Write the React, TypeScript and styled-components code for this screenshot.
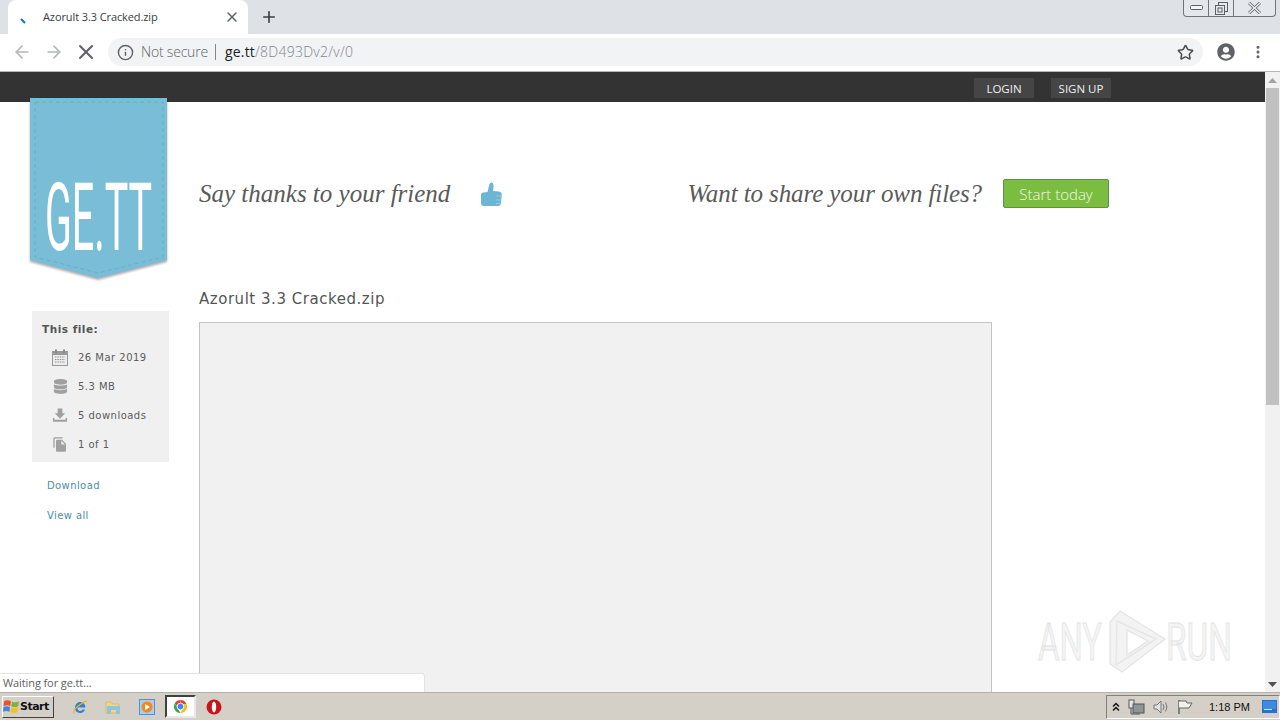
import React from "react";
import styled, { createGlobalStyle } from "styled-components";
import { ArrowLeft, ArrowRight, X, Info, Star, Plus, EllipsisVertical } from "lucide-react";
import { FaDatabase, FaUserCircle } from "react-icons/fa";
import { MdFileCopy } from "react-icons/md";

const Global = createGlobalStyle`
  html, body { margin: 0; padding: 0; width: 1280px; height: 720px; overflow: hidden; background: #fff; }
  * { box-sizing: border-box; }
`;

const Screen = styled.div`
  position: relative;
  width: 1280px;
  height: 720px;
  display: flex;
  flex-direction: column;
  overflow: hidden;
  font-family: "Open Sans", "Liberation Sans", sans-serif;
`;

const TabStrip = styled.div`
  height: 34px;
  background: #dee1e6;
  display: flex;
  align-items: stretch;
  padding-left: 8px;
  position: relative;
  flex: none;
`;

const Tab = styled.div`
  width: 240px;
  background: #fff;
  border-radius: 8px 8px 0 0;
  display: flex;
  align-items: center;
  padding: 0 8px 0 35px;
  font-size: 11px;
  color: #3c4043;
  position: relative;
`;

const TabTitle = styled.span`
  flex: 1;
  letter-spacing: -0.1px;
  padding-bottom: 2px;
`;

const Spinner = styled.svg`
  position: absolute;
  left: 12px;
  top: 17px;
`;

const NewTab = styled.div`
  margin-left: 12px;
  display: flex;
  align-items: center;
  color: #3c4043;
`;

const WindowControls = styled.div`
  position: absolute;
  right: 4px;
  top: 0;
  height: 17px;
  width: 93px;
  display: grid;
  grid-template-columns: 25px 25px 1fr;
  border: 1px solid #70757c;
  border-top: none;
  border-radius: 0 0 4px 4px;
  background: #e4e7ec;
`;

const ControlCell = styled.div<{ $line?: boolean }>`
  display: flex;
  align-items: center;
  justify-content: center;
  border-right: ${(p) => (p.$line ? "1px solid #70757c" : "none")};
`;

const Toolbar = styled.div`
  height: 38px;
  flex: none;
  background: #fff;
  border-bottom: 1px solid #b8b8b8;
  display: flex;
  align-items: center;
  padding: 0 0 1px 6px;
`;

const NavSlot = styled.div<{ $color: string }>`
  width: 32px;
  display: flex;
  align-items: center;
  justify-content: center;
  color: ${(p) => p.$color};
  flex: none;
`;

const Omnibox = styled.div`
  margin-left: 6px;
  width: 1095px;
  height: 28px;
  background: #f1f3f4;
  border-radius: 14px;
  display: flex;
  align-items: center;
  padding: 0 9px 0 9px;
  font-size: 14px;
  color: #5f6368;
  flex: none;
  letter-spacing: -0.2px;
`;

const SecureText = styled.span`
  margin-left: 7px;
  font-weight: 300;
  padding-bottom: 2px;
`;

const Divider = styled.span`
  width: 1px;
  height: 16px;
  background: #80868b;
  margin: 0 9px 0 7px;
`;

const Host = styled.span`
  color: #202124;
  padding-bottom: 2px;
  letter-spacing: 0.2px;
`;

const UrlPath = styled.span`
  color: #80868b;
  font-weight: 300;
  flex: 1;
  padding-bottom: 2px;
  letter-spacing: 0.26px;
`;

const ToolIcons = styled.div`
  display: flex;
  align-items: center;
  color: #5f6368;
  margin-left: 14px;
  gap: 15px;
`;

const PageArea = styled.div`
  flex: 1;
  min-height: 0;
  display: flex;
  position: relative;
`;

const Viewport = styled.div`
  flex: 1;
  min-width: 0;
  background: #fff;
  overflow: hidden;
  display: flex;
  flex-direction: column;
`;

const TopBar = styled.div`
  height: 30px;
  background: #333;
  flex: none;
  display: flex;
  align-items: center;
  justify-content: flex-end;
  gap: 17px;
  padding: 2px 154px 0 0;
`;

const TopButton = styled.div<{ $w: number }>`
  width: ${(p) => p.$w}px;
  height: 20px;
  background: #454545;
  color: #f0f0f0;
  font-size: 11.5px;
  display: flex;
  align-items: flex-end;
  justify-content: center;
  padding: 0 0 2px 0;
  line-height: 15px;
`;

const Logo = styled.svg`
  position: absolute;
  left: 28px;
  top: 24px;
  filter: drop-shadow(0 2px 1px rgba(0, 0, 0, 0.32));
`;

const Columns = styled.div`
  flex: 1;
  min-height: 0;
  display: flex;
`;

const SideColumn = styled.div`
  width: 137px;
  margin-left: 32px;
  padding-top: 209px;
  flex: none;
`;

const FileCard = styled.div`
  height: 151px;
  background: #f0f0f0;
  padding: 10px 0 0 10px;
  font-family: "DejaVu Sans", sans-serif;
  color: #555;
`;

const CardTitle = styled.div`
  font-size: 10.5px;
  font-weight: 700;
  letter-spacing: 0.5px;
  line-height: 16px;
  margin-bottom: 6px;
  color: #555;
`;

const FactRow = styled.div`
  height: 29px;
  display: flex;
  align-items: center;
  font-size: 10px;
  letter-spacing: 0.48px;
  color: #5c5c5c;
`;

const FactIcon = styled.div`
  width: 16px;
  margin: 0 10px 0 10px;
  display: flex;
  justify-content: center;
  color: #a0a0a0;
`;

const SideLink = styled.a`
  display: block;
  margin: 15px 0 0 15px;
  height: 15px;
  line-height: 15px;
  font-family: "DejaVu Sans", sans-serif;
  font-size: 10px;
  letter-spacing: 0.4px;
  color: #4f8ea3;
  position: relative;
  top: 1px;
`;

const MainColumn = styled.div`
  margin-left: 30px;
  width: 910px;
  padding-top: 77px;
  flex: none;
`;

const Promo = styled.div`
  height: 29px;
  display: flex;
  align-items: center;
`;

const Tagline = styled.span<{ $tight?: boolean }>`
  font-family: "Liberation Serif", serif;
  font-style: italic;
  font-size: 25px;
  letter-spacing: ${(p) => (p.$tight ? "-0.1px" : "0")};
  color: #5a5a5a;
  white-space: nowrap;
`;

const ThumbSlot = styled.span`
  margin-left: 31px;
  display: flex;
`;

const ShareSlot = styled.div`
  margin-left: auto;
  display: flex;
  align-items: center;
  gap: 21px;
`;

const StartButton = styled.div`
  width: 106px;
  height: 29px;
  background: #7abd3f;
  border: 1px solid #5f8f52;
  border-radius: 2px;
  color: #f2f8ea;
  font-size: 15px;
  font-weight: 300;
  display: flex;
  align-items: center;
  justify-content: center;
`;

const FileName = styled.h1`
  margin: 80px 0 0;
  font-family: "DejaVu Sans", sans-serif;
  font-weight: 400;
  font-size: 15px;
  line-height: 22px;
  letter-spacing: 0.53px;
  color: #555;
`;

const Preview = styled.div`
  margin-top: 12px;
  width: 793px;
  height: 600px;
  background: #f1f1f1;
  border: 1px solid #c4c4c4;
`;

const Scrollbar = styled.div`
  width: 15px;
  flex: none;
  background: #f1f1f1;
  display: flex;
  flex-direction: column;
  align-items: center;
`;

const ScrollArrow = styled.div`
  height: 16px;
  display: flex;
  align-items: center;
  justify-content: center;
  flex: none;
`;

const ScrollThumb = styled.div`
  width: 13px;
  height: 317px;
  background: #c1c1c1;
  flex: none;
`;

const ScrollSpace = styled.div`
  flex: 1;
`;

const Watermark = styled.svg`
  position: absolute;
  left: 1036px;
  top: 536px;
`;

const StatusBubble = styled.div`
  position: absolute;
  left: 0;
  bottom: 0;
  width: 425px;
  height: 19px;
  background: #fff;
  border: 1px solid #e3e3e3;
  border-left: none;
  border-bottom: none;
  border-radius: 0 3px 0 0;
  font-size: 11px;
  line-height: 18px;
  padding-left: 3px;
  letter-spacing: -0.1px;
  color: #5f5f5f;
`;

const Taskbar = styled.div`
  height: 28px;
  flex: none;
  background: #d4d0c8;
  border-top: 1px solid #b4b1aa;
  display: flex;
  align-items: center;
  padding-left: 2px;
`;

const StartBtn = styled.div`
  width: 52px;
  height: 22px;
  background: #d4d0c8;
  border: 1px solid;
  border-color: #fff #404040 #404040 #fff;
  display: flex;
  align-items: center;
  font-family: "DejaVu Sans", sans-serif;
  font-weight: 700;
  font-size: 11px;
  letter-spacing: -0.5px;
  color: #111;
`;

const QuickIcon = styled.div<{ $ml: number }>`
  margin-left: ${(p) => p.$ml}px;
  width: 16px;
  height: 16px;
  display: flex;
  flex: none;
`;

const ActiveTask = styled.div`
  margin-left: 10px;
  width: 31px;
  height: 23px;
  background: #fff;
  border: 2px solid;
  border-color: #404040 #e8e8e8 #e8e8e8 #404040;
  display: flex;
  align-items: center;
  justify-content: center;
  flex: none;
`;

const Tray = styled.div`
  margin-left: auto;
  width: 174px;
  height: 24px;
  border: 1px solid;
  border-color: #808080 #fff #fff #808080;
  display: flex;
  align-items: center;
  padding-left: 5px;
  font-family: "Liberation Sans", sans-serif;
  font-size: 11px;
  color: #111;
`;

const TrayItem = styled.div<{ $ml: number }>`
  margin-left: ${(p) => p.$ml}px;
  display: flex;
  flex: none;
`;

const Clock = styled.span`
  margin-left: 16px;
  white-space: nowrap;
`;

const CalendarIcon = () => (
  <svg width="16" height="17" viewBox="0 0 16 17">
    <rect x="0.5" y="2.5" width="15" height="14" fill="#ececec" stroke="#9a9a9a" />
    <rect x="1" y="3" width="14" height="3" fill="#9a9a9a" />
    <rect x="3" y="0.5" width="2" height="4" fill="#8a8a8a" />
    <rect x="11" y="0.5" width="2" height="4" fill="#8a8a8a" />
    <path d="M3 8 H13 M3 10.5 H13 M3 13 H13" stroke="#8e8e8e" strokeDasharray="1.4 1" />
  </svg>
);

const DownloadIcon = () => (
  <svg width="17" height="16" viewBox="0 0 17 16">
    <path d="M6 0 H11 V5 H14 L8.5 11 L3 5 H6 Z" fill="#a0a0a0" />
    <path d="M1 10 V14 H16 V10 H14.5 V12 H2.5 V10 Z" fill="#a0a0a0" />
  </svg>
);

const ThumbIcon = () => (
  <svg width="21" height="24" viewBox="0 0 21 24">
    <path
      d="M0 13 Q0 10.5 2.5 10.5 L6.5 10 L8.5 2 Q9.5 0 11 .5 Q13 1.5 12.5 5 L12 9 L18 9.5 Q21 10 20.7 12.5 L20 21.5 Q19.5 24 17 24 L3 24 Q0 24 0 21 Z"
      fill="#6cb6d4"
    />
    <path d="M15 14 H20.5 M15 18 H20 M15 21.5 H19.5" stroke="#9dd0e5" strokeWidth="0.8" />
  </svg>
);

const facts = [
  { icon: <CalendarIcon />, label: "26 Mar 2019" },
  { icon: <FaDatabase size={15} />, label: "5.3 MB" },
  { icon: <DownloadIcon />, label: "5 downloads" },
  { icon: <MdFileCopy size={19} />, label: "1 of 1" },
];

export default function App() {
  return (
    <Screen>
      <Global />
      <TabStrip>
        <Tab>
          <Spinner width="8" height="8" viewBox="0 0 8 8">
            <path d="M1 2 L5 6" stroke="#1a6fb5" strokeWidth="2" fill="none" />
          </Spinner>
          <TabTitle>Azorult 3.3 Cracked.zip</TabTitle>
          <X size={16} strokeWidth={2.2} color="#5f6368" />
        </Tab>
        <NewTab>
          <Plus size={18} strokeWidth={2.2} />
        </NewTab>
        <WindowControls>
          <ControlCell $line>
            <svg width="13" height="6" viewBox="0 0 13 6">
              <rect x="0.5" y="0.5" width="12" height="4" rx="1" fill="#f3f4f6" stroke="#5c6066" />
            </svg>
          </ControlCell>
          <ControlCell $line>
            <svg width="13" height="13" viewBox="0 0 13 13">
              <rect x="3.5" y="0.5" width="9" height="9" fill="none" stroke="#5c6066" />
              <rect x="0.5" y="3.5" width="9" height="9" fill="#e4e7ec" stroke="#5c6066" />
              <rect x="3" y="6" width="4" height="4" fill="none" stroke="#5c6066" />
            </svg>
          </ControlCell>
          <ControlCell>
            <svg width="13" height="12" viewBox="0 0 13 12">
              <path d="M1 1 L12 11 M12 1 L1 11" stroke="#5c6066" strokeWidth="3" />
              <path d="M1 1 L12 11 M12 1 L1 11" stroke="#f3f4f6" strokeWidth="1.4" />
            </svg>
          </ControlCell>
        </WindowControls>
      </TabStrip>

      <Toolbar>
        <NavSlot $color="#b3b6ba">
          <ArrowLeft size={20} strokeWidth={1.9} />
        </NavSlot>
        <NavSlot $color="#b3b6ba">
          <ArrowRight size={20} strokeWidth={1.9} />
        </NavSlot>
        <NavSlot $color="#5f6368">
          <X size={24} strokeWidth={2.1} />
        </NavSlot>
        <Omnibox>
          <Info size={17} strokeWidth={2} />
          <SecureText>Not secure</SecureText>
          <Divider />
          <Host>ge.tt</Host>
          <UrlPath>/8D493Dv2/v/0</UrlPath>
          <Star size={17} strokeWidth={2.2} color="#4b4f54" />
        </Omnibox>
        <ToolIcons>
          <FaUserCircle size={18} />
          <EllipsisVertical size={16} strokeWidth={2.6} />
        </ToolIcons>
      </Toolbar>

      <PageArea>
        <Viewport>
          <TopBar>
            <TopButton $w={60}>LOGIN</TopButton>
            <TopButton $w={60}>SIGN UP</TopButton>
          </TopBar>
          <Columns>
            <SideColumn>
              <FileCard>
                <CardTitle>This file:</CardTitle>
                {facts.map((f) => (
                  <FactRow key={f.label}>
                    <FactIcon>{f.icon}</FactIcon>
                    {f.label}
                  </FactRow>
                ))}
              </FileCard>
              <SideLink>Download</SideLink>
              <SideLink>View all</SideLink>
            </SideColumn>
            <MainColumn>
              <Promo>
                <Tagline>Say thanks to your friend</Tagline>
                <ThumbSlot>
                  <ThumbIcon />
                </ThumbSlot>
                <ShareSlot>
                  <Tagline $tight>Want to share your own files?</Tagline>
                  <StartButton>Start today</StartButton>
                </ShareSlot>
              </Promo>
              <FileName>Azorult 3.3 Cracked.zip</FileName>
              <Preview />
            </MainColumn>
          </Columns>
        </Viewport>
        <Scrollbar>
          <ScrollArrow>
            <svg width="9" height="5" viewBox="0 0 9 5"><path d="M0 5 L4.5 0 L9 5 Z" fill="#a3a3a3" /></svg>
          </ScrollArrow>
          <ScrollThumb />
          <ScrollSpace />
          <ScrollArrow>
            <svg width="9" height="5" viewBox="0 0 9 5"><path d="M0 0 L4.5 5 L9 0 Z" fill="#505050" /></svg>
          </ScrollArrow>
        </Scrollbar>

        <Logo width="142" height="186" viewBox="0 0 142 186">
          <path d="M2 2 H139 V164 L70 182 L2 164 Z" fill="#79bdd7" />
          <path d="M7 6 H135 V161 L70 177 L7 161 Z" fill="none" stroke="#68aecb" strokeWidth="1" strokeDasharray="4 3" />
          <text transform="translate(17 154) scale(.42 1)" fontFamily="Roboto, sans-serif" fontWeight="400" fontSize="94" fill="#fff" textLength="255" lengthAdjust="spacingAndGlyphs">GE.TT</text>
        </Logo>

        <Watermark width="200" height="70" viewBox="0 0 200 70">
          <text transform="translate(2 52) scale(.66 1)" fontFamily="Roboto, sans-serif" fontWeight="400" fontSize="52" fill="#f4f4f4" stroke="#e2e2e2" strokeWidth="0.8" textLength="97" lengthAdjust="spacingAndGlyphs">ANY</text>
          <path d="M74 14 L84 3 L129 31 L86 64 L74 56 Z" fill="#f3f3f3" stroke="#e4e4e4" strokeWidth="1.2" />
          <path d="M81 13 L120 31 L80 57 Z" fill="none" stroke="#e6e6e6" strokeWidth="1.5" />
          <path d="M91 22 L112 33 L91 47 Z" fill="#fff" stroke="#e2e2e2" strokeWidth="1.2" />
          <text transform="translate(130 52) scale(.66 1)" fontFamily="Roboto, sans-serif" fontWeight="400" fontSize="52" fill="#f4f4f4" stroke="#e2e2e2" strokeWidth="0.8" textLength="100" lengthAdjust="spacingAndGlyphs">RUN</text>
        </Watermark>

        <StatusBubble>Waiting for ge.tt...</StatusBubble>
      </PageArea>

      <Taskbar>
        <StartBtn>
          <svg width="17" height="17" viewBox="0 0 16 16">
            <path d="M1 3 Q4 1 7.5 3 L6.8 7.5 Q4 6 .5 7.5 Z" fill="#e8532b" />
            <path d="M8.5 3.2 Q12 5 15 3 L14.3 7.8 Q11 9.5 7.8 7.8 Z" fill="#7cb342" />
            <path d="M.4 8.5 Q4 7 6.6 8.6 L6 13 Q3 11.5 0 13 Z" fill="#3f87d8" />
            <path d="M7.6 8.8 Q11 10.5 14.2 8.8 L13.5 13.5 Q10 15 7 13.2 Z" fill="#f5c026" />
          </svg>
          Start
        </StartBtn>
        <QuickIcon $ml={18}>
          <svg width="16" height="16" viewBox="0 0 16 16">
            <path d="M3 8 A5.2 5.2 0 0 1 13.4 8.6 H5.5 A2.8 2.8 0 0 0 10.6 10.6 H13 A5.2 5.2 0 0 1 3 8 Z" fill="#2f80d0" />
            <path d="M2 14.5 Q0 11 9 5 Q14 1 15 2.5" fill="none" stroke="#e5b53a" strokeWidth="1.3" />
          </svg>
        </QuickIcon>
        <QuickIcon $ml={17}>
          <svg width="16" height="16" viewBox="0 0 16 16">
            <path d="M1 3 H6 L7.5 5 H14 V14 H1 Z" fill="#f1d77e" stroke="#c9ab55" strokeWidth="0.6" />
            <path d="M2 7 H15 V15 H11 V11 H6 V15 H2 Z" fill="#8fc3df" />
          </svg>
        </QuickIcon>
        <QuickIcon $ml={18}>
          <svg width="16" height="16" viewBox="0 0 16 16">
            <rect x="0.5" y="0.5" width="15" height="15" fill="#a8cdf0" stroke="#5b8fc9" />
            <circle cx="8" cy="8" r="5.5" fill="#f08a1d" />
            <path d="M6.2 5 L11 8 L6.2 11 Z" fill="#fff" />
          </svg>
        </QuickIcon>
        <ActiveTask>
          <svg width="15" height="15" viewBox="0 0 16 16">
            <path d="M8 1 A7 7 0 0 1 14.5 5.5 H8 Z" fill="#ea4335" />
            <path d="M1.9 4.5 A7 7 0 0 1 8 1 V5.5 L5 9 Z" fill="#ea4335" />
            <path d="M1.9 4.5 L5 10 L8 15 A7 7 0 0 1 1.9 4.5 Z" fill="#34a853" />
            <path d="M14.5 5.5 A7 7 0 0 1 8 15 L11 9 V5.5 Z" fill="#fbbc05" />
            <circle cx="8" cy="8" r="3.6" fill="#4285f4" stroke="#fff" strokeWidth="1" />
          </svg>
        </ActiveTask>
        <QuickIcon $ml={10}>
          <svg width="16" height="16" viewBox="0 0 16 16">
            <circle cx="8" cy="8" r="7.5" fill="#c8141a" />
            <ellipse cx="8" cy="8" rx="2.2" ry="5.4" fill="#fff" />
          </svg>
        </QuickIcon>
        <Tray>
          <TrayItem $ml={0}>
            <svg width="8" height="10" viewBox="0 0 8 10">
              <path d="M1 4.5 L4 1.5 L7 4.5 M1 8.5 L4 5.5 L7 8.5" fill="none" stroke="#111" strokeWidth="1.5" />
            </svg>
          </TrayItem>
          <TrayItem $ml={8}>
            <svg width="17" height="16" viewBox="0 0 17 16">
              <rect x="1" y="1" width="5" height="8" fill="#e8e8e8" stroke="#555" />
              <rect x="5" y="5" width="11" height="9" fill="#8d9595" stroke="#555" />
              <path d="M3 9 V15 H12" fill="none" stroke="#555" />
            </svg>
          </TrayItem>
          <TrayItem $ml={8}>
            <svg width="17" height="14" viewBox="0 0 17 14">
              <path d="M1 5 H4 L8 1 V13 L4 9 H1 Z" fill="#e2e2e2" stroke="#777" />
              <path d="M10 4 Q12 7 10 10 M12.5 2.5 Q15.5 7 12.5 11.5" fill="none" stroke="#777" />
            </svg>
          </TrayItem>
          <TrayItem $ml={7}>
            <svg width="16" height="16" viewBox="0 0 16 16">
              <path d="M2 1 V15" stroke="#555" strokeWidth="1.3" />
              <path d="M2 2 H9 L10 4 H15 L12 9 H2" fill="#f2f0ea" stroke="#666" />
            </svg>
          </TrayItem>
          <Clock>1:18 PM</Clock>
          <TrayItem $ml={12}>
            <svg width="15" height="15" viewBox="0 0 15 15">
              <rect width="15" height="13" y="1" fill="#2f6fc0" />
              <rect x="1" y="2" width="13" height="8" fill="#3f8be0" />
              <rect x="2" y="10" width="8" height="1" fill="#dfe9f5" />
            </svg>
          </TrayItem>
        </Tray>
      </Taskbar>
    </Screen>
  );
}
